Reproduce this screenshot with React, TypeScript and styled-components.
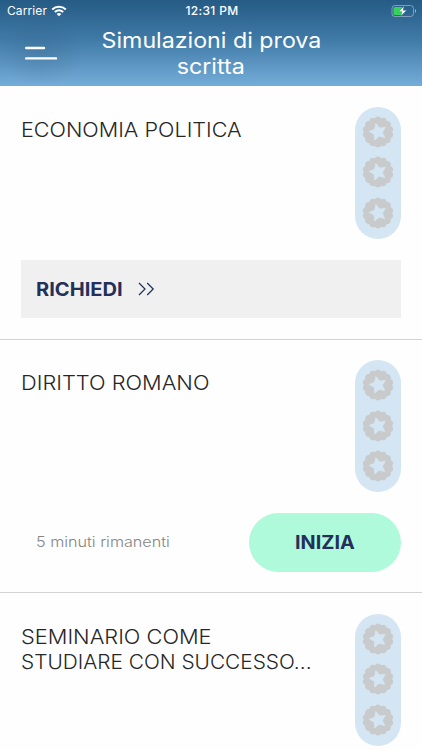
import React from "react";
import styled, { createGlobalStyle } from "styled-components";

const GlobalStyle = createGlobalStyle`
  * { box-sizing: border-box; }
  html, body { margin: 0; padding: 0; background: #fff; overflow: hidden; }
  body { font-family: Inter, "Liberation Sans", sans-serif; }
  button { font: inherit; border: 0; padding: 0; background: none; }
`;

const Screen = styled.div`
  width: 422px;
  height: 750px;
  overflow: hidden;
  background: #fefefe;
`;

const Header = styled.header`
  height: 86px;
  background: linear-gradient(#255b84, #3f79a6 45%, #75add9);
  color: #fff;
`;

const StatusBar = styled.div`
  height: 22px;
  display: grid;
  grid-template-columns: 1fr auto 1fr;
  align-items: center;
  padding: 0 5px 0 7px;
  font-size: 12px;
  line-height: 22px;
`;

const Carrier = styled.div`
  display: flex;
  align-items: center;
  gap: 4px;
  letter-spacing: 0.1px;
`;

const Clock = styled.div`
  font-weight: 500;
  letter-spacing: 0.35px;
`;

const BatterySlot = styled.div`
  display: flex;
  justify-content: flex-end;
`;

const NavBar = styled.div`
  display: grid;
  grid-template-columns: 82px 1fr 82px;
`;

const MenuButton = styled.button`
  height: 63px;
  padding: 1px 0 0 25px;
  display: flex;
  align-items: flex-start;
  background: radial-gradient(ellipse 42px 34px at 41px 31px, rgba(45, 85, 120, 0.2), transparent);
`;

const Title = styled.h1`
  margin: 6px 0 0;
  display: flex;
  flex-direction: column;
  align-items: center;
  font-size: 21px;
  line-height: 26px;
  font-weight: 400;
`;

const Label = styled.span<{ $stretch?: number; $origin?: string }>`
  display: block;
  width: max-content;
  white-space: nowrap;
  transform: scaleX(${(p) => p.$stretch ?? 1});
  transform-origin: ${(p) => p.$origin ?? "left"} center;
`;

const Row = styled.section`
  height: 253.5px;
  padding: 20.5px 21px 0;
  border-bottom: 1px solid #d3d3d3;
`;

const RowTop = styled.div`
  height: 132px;
  display: flex;
  justify-content: space-between;
`;

const Subject = styled.h2`
  margin: 11px 0 0;
  font-size: 20px;
  line-height: 25px;
  font-weight: 300;
  color: #262626;
`;

const Rating = styled.div`
  width: 46.5px;
  height: 132px;
  border-radius: 24px;
  background: #d4e6f3;
  display: flex;
  flex-direction: column;
  align-items: center;
  padding-top: 9px;
  gap: 8.7px;
`;

const RequestButton = styled.button`
  width: 100%;
  height: 58.5px;
  margin-top: 21px;
  padding: 0 0 0 15px;
  background: #f0f0f0;
  color: #24305a;
  display: flex;
  align-items: center;
  font-size: 18.5px;
  font-weight: 700;
`;

const ArrowSlot = styled.span`
  display: flex;
  margin: 1px 0 0 22px;
`;

const Actions = styled.div`
  margin-top: 21px;
  display: flex;
  align-items: center;
  justify-content: space-between;
  padding-left: 15px;
`;

const Remaining = styled.div`
  padding-bottom: 2px;
  font-size: 14.3px;
  font-weight: 300;
  color: #858585;
`;

const StartButton = styled.button`
  width: 152.5px;
  height: 58.5px;
  border-radius: 30px;
  background: #aefadb;
  color: #24305a;
  font-size: 18.5px;
  font-weight: 700;
  display: flex;
  align-items: center;
  justify-content: center;
`;

const point = (radius: number, degrees: number) => {
  const a = (degrees * Math.PI) / 180;
  return `${(16 + radius * Math.cos(a)).toFixed(2)} ${(16 + radius * Math.sin(a)).toFixed(2)}`;
};

const LOBES = 14;
const sealPath =
  `M${point(14, 0)}` +
  Array.from({ length: LOBES }, (_, i) => {
    const end = ((i + 1) * 360) / LOBES;
    return `A3.6 3.6 0 0 1 ${point(14, end)}`;
  }).join("") +
  "Z";
const starPath =
  "M" +
  Array.from({ length: 10 }, (_, i) => point(i % 2 ? 4.3 : 8.7, 184 + i * 36)).join("L") +
  "Z";

const Seal = () => (
  <svg width="32" height="32" viewBox="0 0 32 32">
    <path d={sealPath} fill="#c9cacb" />
    <path d={starPath} fill="#d4e6f3" stroke="#d4e6f3" strokeWidth="0.8" strokeLinejoin="round" />
  </svg>
);

const Wifi = () => (
  <svg width="16" height="12" viewBox="0 0 16 12" fill="none" stroke="#fff" strokeWidth="2">
    <path d="M1.2 4.5C5 .9 11 .9 14.8 4.5" />
    <path d="M3.8 7.1C6.3 4.9 9.7 4.9 12.2 7.1" />
    <path d="M8 11.2L5.6 8.9Q8 7.1 10.4 8.9Z" fill="#fff" stroke="none" />
  </svg>
);

const Battery = () => (
  <svg width="26" height="13" viewBox="0 0 26 13" fill="none">
    <rect x="1" y=".5" width="21.5" height="11" rx="3" stroke="#a9c0d2" strokeOpacity=".65" />
    <path d="M24 4Q26 6 24 8Z" fill="#a9c0d2" />
    <path d="M4 2H11V10H4Q2.5 10 2.5 8.5V3.5Q2.5 2 4 2Z" fill="#35d35c" />
    <path d="M13.2 .9L7.5 6.7H11L9.7 11.3L15.7 5.3H12.1Z" fill="#fff" stroke="#346a91" strokeWidth=".5" />
  </svg>
);

const Menu = () => (
  <svg width="33" height="40" viewBox="0 0 33 40" stroke="#fff" strokeWidth="2.4" strokeLinecap="round">
    <path d="M1.2 25H19M1.2 35.4H31" />
  </svg>
);

const Arrows = () => (
  <svg width="17" height="14" viewBox="0 0 17 14" fill="none" stroke="#24305a" strokeWidth="1.25">
    <path d="M1 1L7 7L1 13M9.2 1L15.2 7L9.2 13" />
  </svg>
);

type Line = { text: string; stretch: number };

const Course = ({ lines, children }: { lines: Line[]; children?: React.ReactNode }) => (
  <Row>
    <RowTop>
      <Subject>
        {lines.map((l) => (
          <Label key={l.text} $stretch={l.stretch}>{l.text}</Label>
        ))}
      </Subject>
      <Rating>
        <Seal />
        <Seal />
        <Seal />
      </Rating>
    </RowTop>
    {children}
  </Row>
);

export default function App() {
  return (
    <>
      <GlobalStyle />
      <Screen>
        <Header>
          <StatusBar>
            <Carrier>Carrier <Wifi /></Carrier>
            <Clock>12:31 PM</Clock>
            <BatterySlot><Battery /></BatterySlot>
          </StatusBar>
          <NavBar>
            <MenuButton aria-label="Menu"><Menu /></MenuButton>
            <Title>
              <Label $origin="center" $stretch={1.105}>Simulazioni di prova</Label>
              <Label $origin="center" $stretch={1.105}>scritta</Label>
            </Title>
          </NavBar>
        </Header>
        <Course lines={[{ text: "ECONOMIA POLITICA", stretch: 1.08 }]}>
          <RequestButton>
            <Label $stretch={1.085}>RICHIEDI</Label>
            <ArrowSlot><Arrows /></ArrowSlot>
          </RequestButton>
        </Course>
        <Course lines={[{ text: "DIRITTO ROMANO", stretch: 1.09 }]}>
          <Actions>
            <Remaining><Label $stretch={1.13}>5 minuti rimanenti</Label></Remaining>
            <StartButton><Label $origin="center" $stretch={1.07}>INIZIA</Label></StartButton>
          </Actions>
        </Course>
        <Course
          lines={[
            { text: "SEMINARIO COME", stretch: 1.09 },
            { text: "STUDIARE CON SUCCESSO...", stretch: 1.042 },
          ]}
        />
      </Screen>
    </>
  );
}
